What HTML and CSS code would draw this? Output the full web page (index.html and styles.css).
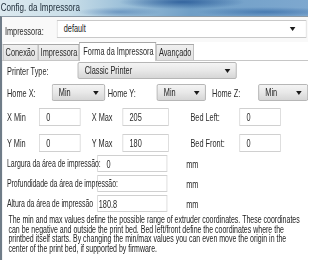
FILE: index.html
```html
<!DOCTYPE html>
<html lang="pt-BR">
<head>
    <meta charset="UTF-8">
    <title>Config. da Impressora</title>
    <link rel="stylesheet" href="styles.css">
</head>
<body>
    <!-- the whole dialog is drawn wide, then squeezed horizontally like the screenshot -->
    <div class="screen">
        <div class="titlebar">Config. da Impressora</div>

        <div class="window">
            <div class="printer-row">
                <span class="printer-label">Impressora:</span>
                <div class="combo combo-white printer-combo">default</div>
            </div>

            <div class="tabs">
                <div class="tab tab-conexao">Conexão</div>
                <div class="tab tab-impressora">Impressora</div>
                <div class="tab tab-active">Forma da Impressora</div>
                <div class="tab tab-avancado">Avançado</div>
            </div>

            <div class="panel">
                <div class="row row-type">
                    <span class="lbl lbl-type">Printer Type:</span>
                    <div class="combo combo-type">Classic Printer</div>
                </div>

                <div class="row row-home">
                    <span class="lbl lbl-homex">Home X:</span>
                    <div class="combo combo-home combo-hx">Min</div>
                    <span class="lbl lbl-homey">Home Y:</span>
                    <div class="combo combo-home combo-hy">Min</div>
                    <span class="lbl lbl-homez">Home Z:</span>
                    <div class="combo combo-home combo-hz">Min</div>
                </div>

                <div class="row row-min">
                    <span class="lbl lbl-min">X Min</span>
                    <div class="field field-min">0</div>
                    <span class="lbl lbl-max">X Max</span>
                    <div class="field field-max">205</div>
                    <span class="lbl lbl-bed">Bed Left:</span>
                    <div class="field field-bed">0</div>
                </div>

                <div class="row row-min row-y">
                    <span class="lbl lbl-min">Y Min</span>
                    <div class="field field-min">0</div>
                    <span class="lbl lbl-max">Y Max</span>
                    <div class="field field-max">180</div>
                    <span class="lbl lbl-bed">Bed Front:</span>
                    <div class="field field-bed">0</div>
                </div>

                <div class="row row-area">
                    <span class="lbl lbl-area">Largura da área de impressão:</span>
                    <div class="field field-area field-largura">0</div>
                    <span class="lbl lbl-mm">mm</span>
                </div>

                <div class="row row-area">
                    <span class="lbl lbl-area">Profundidade da área de impressão:</span>
                    <div class="field field-area"></div>
                    <span class="lbl lbl-mm">mm</span>
                </div>

                <div class="row row-area">
                    <span class="lbl lbl-area">Altura da área de impressão</span>
                    <div class="field field-area">180.8</div>
                    <span class="lbl lbl-mm">mm</span>
                </div>

                <p class="help">The min and max values define the possible range of extruder coordinates. These coordinates<br>
                    can be negative and outside the print bed. Bed left/front define the coordinates where the<br>
                    printbed itself starts. By changing the min/max values you can even move the origin in the<br>
                    center of the print bed, if supported by firmware.</p>
            </div>
        </div>
    </div>
</body>
</html>
```

FILE: styles.css
```css
body {
    margin: 0;
    width: 310px;
    height: 260px;
    overflow: hidden;
    background: #ffffff;
    font-family: "Liberation Sans", Arial, sans-serif;
    font-size: 10.5px;
    color: #2a2a2a;
}
.screen {
    width: 440px;
    height: 260px;
    overflow: hidden;
    white-space: nowrap;
    transform: scaleX(0.7);
    transform-origin: 0 0;
}
.titlebar {
    height: 16px;
    line-height: 15px;
    padding-left: 1px;
    font-size: 11.5px;
    color: #1c2a36;
    background:
        radial-gradient(ellipse 90px 7px at 260px 2px, rgba(30, 80, 145, 0.75), rgba(30, 80, 145, 0)),
        radial-gradient(ellipse 100px 5px at 380px 12px, rgba(40, 95, 160, 0.6), rgba(40, 95, 160, 0)),
        radial-gradient(ellipse 60px 5px at 170px 12px, rgba(60, 110, 170, 0.5), rgba(60, 110, 170, 0)),
        linear-gradient(90deg, #dce9ef 0%, #cadfe9 22%, #9cc0d9 40%, #6f9ec6 62%, #7ea8cf 100%);
}
.window {
    border-top: 1px solid #8c99a4;
    border-left: 3px solid #6f7c88;
    height: 243px;
}
.printer-row {
    display: flex;
    align-items: center;
    height: 25px;
    padding-left: 4px;
    background: #f9f9f9;
}
.printer-label {
    width: 74px;
    padding-top: 3px;
}
.combo {
    position: relative;
    box-sizing: border-box;
    height: 17px;
    line-height: 15px;
    padding-left: 9px;
    color: #222222;
    border: 1px solid #a9a9a9;
    border-radius: 2px;
    background: linear-gradient(#f4f4f4, #e8e8e8 50%, #d6d6d6);
}
.combo::after {
    content: "";
    position: absolute;
    right: 8px;
    top: 6px;
    border-left: 4px solid transparent;
    border-right: 4px solid transparent;
    border-top: 4px solid #1a1a1a;
}
.combo-white {
    background: #ffffff;
    border-color: #c9c9c9;
    border-radius: 0;
}
.printer-combo {
    width: 357px;
    height: 18px;
    margin-bottom: 2px;
}
.printer-combo::after {
    right: 15px;
}
.tabs {
    display: flex;
    align-items: flex-end;
    height: 18px;
    padding-left: 1px;
    border-bottom: 1px solid #c6c6c6;
}
.tab {
    box-sizing: border-box;
    height: 16px;
    line-height: 14px;
    padding-left: 3px;
    border: 1px solid #a8a8a8;
    border-bottom: none;
    background: linear-gradient(#f0f0f0, #e1e1e1);
    margin-right: -1px;
    overflow: hidden;
}
.tab-conexao {
    width: 51px;
}
.tab-impressora {
    width: 59px;
}
.tab-active {
    width: 110px;
    height: 19px;
    line-height: 16px;
    background: #ffffff;
    margin-bottom: -1px;
    margin-left: 1px;
    position: relative;
    padding-left: 5px;
}
.tab-avancado {
    width: 54px;
    margin-left: 1px;
}
.panel {
    padding-left: 7px;
}
.row {
    display: flex;
    align-items: center;
}
.row-type {
    margin-top: 1px;
    height: 17px;
}
.lbl-type {
    width: 101px;
}
.combo-type {
    width: 227px;
}
.row-home {
    margin-top: 5px;
    height: 17px;
}
.lbl-homex {
    width: 64px;
}
.lbl-homey {
    width: 70px;
    margin-left: 4px;
}
.lbl-homez {
    width: 66px;
    margin-left: 9px;
}
.combo-home {
    width: 70px;
}
.combo-hx {
    width: 76px;
}
.combo-hz {
    width: 71px;
}
.field {
    box-sizing: border-box;
    height: 18px;
    line-height: 16px;
    padding-left: 9px;
    border: 1px solid #d0d0d0;
    background: #ffffff;
}
.row-min {
    margin-top: 7px;
    height: 18px;
}
.row-y {
    margin-top: 8px;
}
.lbl-min {
    width: 46px;
}
.field-min {
    width: 59px;
}
.lbl-max {
    width: 44px;
    margin-left: 16px;
}
.field-max {
    width: 66px;
}
.lbl-bed {
    width: 70px;
    margin-left: 31px;
}
.field-bed {
    width: 59px;
}
.row-area {
    margin-top: 3px;
    height: 17px;
}
.row-area .field {
    height: 17px;
}
/* these labels are longer than their column and run over the box */
.lbl-area {
    position: relative;
    z-index: 1;
    width: 129px;
    font-size: 10px;
    letter-spacing: -0.1px;
}
.field-area {
    width: 100px;
    padding-left: 1px;
}
.field-largura {
    padding-left: 12px;
}
.lbl-mm {
    margin-left: 27px;
}
.help {
    margin: 3px 0 0 2px;
    font-size: 10px;
    line-height: 9.6px;
    color: #222;
}
```
